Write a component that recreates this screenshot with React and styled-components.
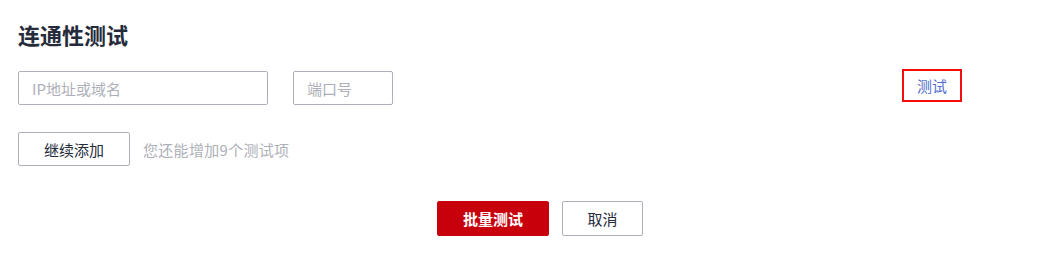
import React from 'react';
import styled, { createGlobalStyle } from 'styled-components';

const GlobalStyle = createGlobalStyle`
  html, body {
    margin: 0;
    padding: 0;
    background: #fff;
  }
  body {
    font-family: "Noto Sans CJK SC", "Noto Sans", "Liberation Sans", sans-serif;
    color: #252b3a;
  }
`;

const Page = styled.div`
  padding: 19px 18px 0 18px;
  width: 1043px;
  box-sizing: border-box;
`;

const Title = styled.h2`
  margin: 0 0 22px 0;
  font-size: 22px;
  line-height: 30px;
  font-weight: 700;
  color: #252b3a;
`;

const Row = styled.div`
  display: flex;
  align-items: ${p => p.$align || 'center'};
  gap: ${p => p.$gap || 0}px;
  margin-bottom: ${p => p.$mb || 0}px;
`;

const Input = styled.input`
  box-sizing: border-box;
  width: ${p => p.$w}px;
  height: 34px;
  padding: 0 13px;
  border: 1px solid #adb0b8;
  border-radius: 2px;
  font-family: inherit;
  font-size: 15px;
  color: #252b3a;
  outline: none;
  &::placeholder {
    color: #adb0b8;
  }
`;

const TestLink = styled.a`
  box-sizing: border-box;
  margin-left: auto;
  margin-right: 63px;
  margin-top: -2px;
  width: 60px;
  height: 33px;
  display: flex;
  align-items: center;
  justify-content: center;
  border: 2px solid #f50d0d;
  color: #526ecc;
  font-size: 15px;
  text-decoration: none;
  cursor: pointer;
`;

const Button = styled.button`
  box-sizing: border-box;
  width: ${p => p.$w}px;
  height: ${p => p.$h || 34}px;
  padding: 0;
  border-radius: 2px;
  font-family: inherit;
  font-size: 15px;
  cursor: pointer;
  border: 1px solid ${p => (p.$primary ? '#c7000b' : '#adb0b8')};
  background: ${p => (p.$primary ? '#c7000b' : '#fff')};
  color: ${p => (p.$primary ? '#fff' : '#252b3a')};
  font-weight: ${p => (p.$primary ? 700 : 400)};
`;

const Hint = styled.span`
  font-size: 15px;
  letter-spacing: 0.3px;
  color: #adb0b8;
`;

const Footer = styled.div`
  display: flex;
  gap: 13px;
  padding-left: 419px;
`;

export default function App() {
  return (
    <>
      <GlobalStyle />
      <Page>
        <Title>连通性测试</Title>
        <Row $gap={25} $mb={27} $align="flex-start">
          <Input $w={250} placeholder="IP地址或域名" />
          <Input $w={100} placeholder="端口号" />
          <TestLink>测试</TestLink>
        </Row>
        <Row $gap={13} $mb={35}>
          <Button $w={112}>继续添加</Button>
          <Hint>您还能增加9个测试项</Hint>
        </Row>
        <Footer>
          <Button $w={112} $h={35} $primary>批量测试</Button>
          <Button $w={81} $h={35}>取消</Button>
        </Footer>
      </Page>
    </>
  );
}
